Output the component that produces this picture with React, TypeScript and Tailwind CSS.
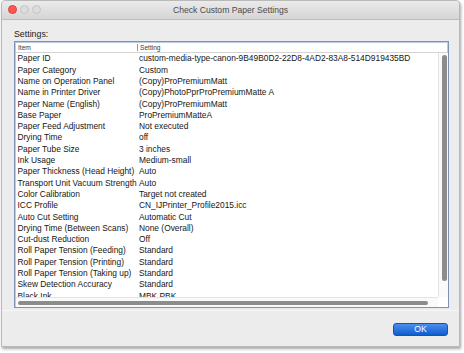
import React from 'react';

const rows: [string, string][] = [
  ['Paper ID', 'custom-media-type-canon-9B49B0D2-22D8-4AD2-83A8-514D919435BD'],
  ['Paper Category', 'Custom'],
  ['Name on Operation Panel', '(Copy)ProPremiumMatt'],
  ['Name in Printer Driver', '(Copy)PhotoPprProPremiumMatte A'],
  ['Paper Name (English)', '(Copy)ProPremiumMatt'],
  ['Base Paper', 'ProPremiumMatteA'],
  ['Paper Feed Adjustment', 'Not executed'],
  ['Drying Time', 'off'],
  ['Paper Tube Size', '3 inches'],
  ['Ink Usage', 'Medium-small'],
  ['Paper Thickness (Head Height)', 'Auto'],
  ['Transport Unit Vacuum Strength', 'Auto'],
  ['Color Calibration', 'Target not created'],
  ['ICC Profile', 'CN_IJPrinter_Profile2015.icc'],
  ['Auto Cut Setting', 'Automatic Cut'],
  ['Drying Time (Between Scans)', 'None (Overall)'],
  ['Cut-dust Reduction', 'Off'],
  ['Roll Paper Tension (Feeding)', 'Standard'],
  ['Roll Paper Tension (Printing)', 'Standard'],
  ['Roll Paper Tension (Taking up)', 'Standard'],
  ['Skew Detection Accuracy', 'Standard'],
  ['Black Ink', 'MBK PBK'],
];

const App: React.FC = () => {
  return (
    <div className="w-[464px] h-[353px] bg-white overflow-hidden font-['Liberation_Sans',Arial,sans-serif]">
      <div className="ml-[1px] w-[459px] h-[347px] bg-[#ececec] border border-[#b9b9b9] rounded-t-[4px] shadow-[1px_2px_3px_rgba(0,0,0,0.35)] flex flex-col">
        {/* title bar */}
        <div className="relative h-[19px] shrink-0 bg-gradient-to-b from-[#ebebeb] to-[#d5d5d5] border-b border-[#bdbdbd] rounded-t-[4px] flex items-center justify-center">
          <div className="absolute left-[6px] top-[4px] flex gap-[3px]">
            <span className="w-[9px] h-[9px] rounded-full bg-[#fc5753] border border-[#de3f3a]" />
            <span className="w-[9px] h-[9px] rounded-full bg-[#dcdcdc] border border-[#c4c4c4]" />
            <span className="w-[9px] h-[9px] rounded-full bg-[#dcdcdc] border border-[#c4c4c4]" />
          </div>
          <span className="text-[8.6px] text-[#4b4b4b]">Check Custom Paper Settings</span>
        </div>

        {/* body */}
        <div className="flex flex-col pl-[12px] pt-[7px]">
          <div className="h-[14px] text-[8.8px] leading-[14px] text-[#1a1a1a]">Settings:</div>
          <div className="w-[435px] h-[267px] bg-white border border-[#7d92b6] shadow-[inset_0_0_0_1px_#bfcbe0] flex flex-col overflow-hidden">
            {/* header */}
            <div className="h-[10px] shrink-0 mx-[1px] mt-[1px] flex items-center border-b border-[#d4d4d4] text-[6.6px] text-[#3a3a3a]">
              <span className="w-[121px] pl-[2px] shrink-0">Item</span>
              <span className="border-l border-[#9a9a9a] h-[7px]" />
              <span className="pl-[2px] leading-[7px]">Setting</span>
            </div>
            {/* scroll body */}
            <div className="grid grid-cols-[422px_11px] grid-rows-[244px_10px] mx-[1px]">
              <div className="overflow-hidden">
                {rows.map(([item, setting]) => (
                  <div key={item} className="h-[11.3px] flex items-center text-[8.4px] text-[#161616] whitespace-nowrap">
                    <span className="w-[123px] pl-[1.5px] shrink-0">{item}</span>
                    <span>{setting}</span>
                  </div>
                ))}
              </div>
              <div className="bg-[#fafafa] border-l border-[#e4e4e4] flex justify-center pt-[2px]">
                <div className="w-[5px] h-[226px] rounded-full bg-[#8c8c8c]" />
              </div>
              <div className="bg-[#fafafa] border-t border-[#e4e4e4] flex items-center pl-[2px]">
                <div className="w-[410px] h-[4px] rounded-full bg-[#8c8c8c]" />
              </div>
              <div className="bg-white" />
            </div>
          </div>
        </div>

        <div className="mt-[2px] h-px bg-[#dcdcdc] border-b border-[#f7f7f7]" />

        {/* footer */}
        <div className="flex justify-end pr-[11px] pt-[12px]">
          <button className="w-[55px] h-[13px] rounded-[3px] bg-gradient-to-b from-[#4a8ff0] to-[#0b5ccd] border border-[#1553b3] text-white text-[8.6px] leading-[11px]">
            OK
          </button>
        </div>
      </div>
    </div>
  );
};

export default App;
